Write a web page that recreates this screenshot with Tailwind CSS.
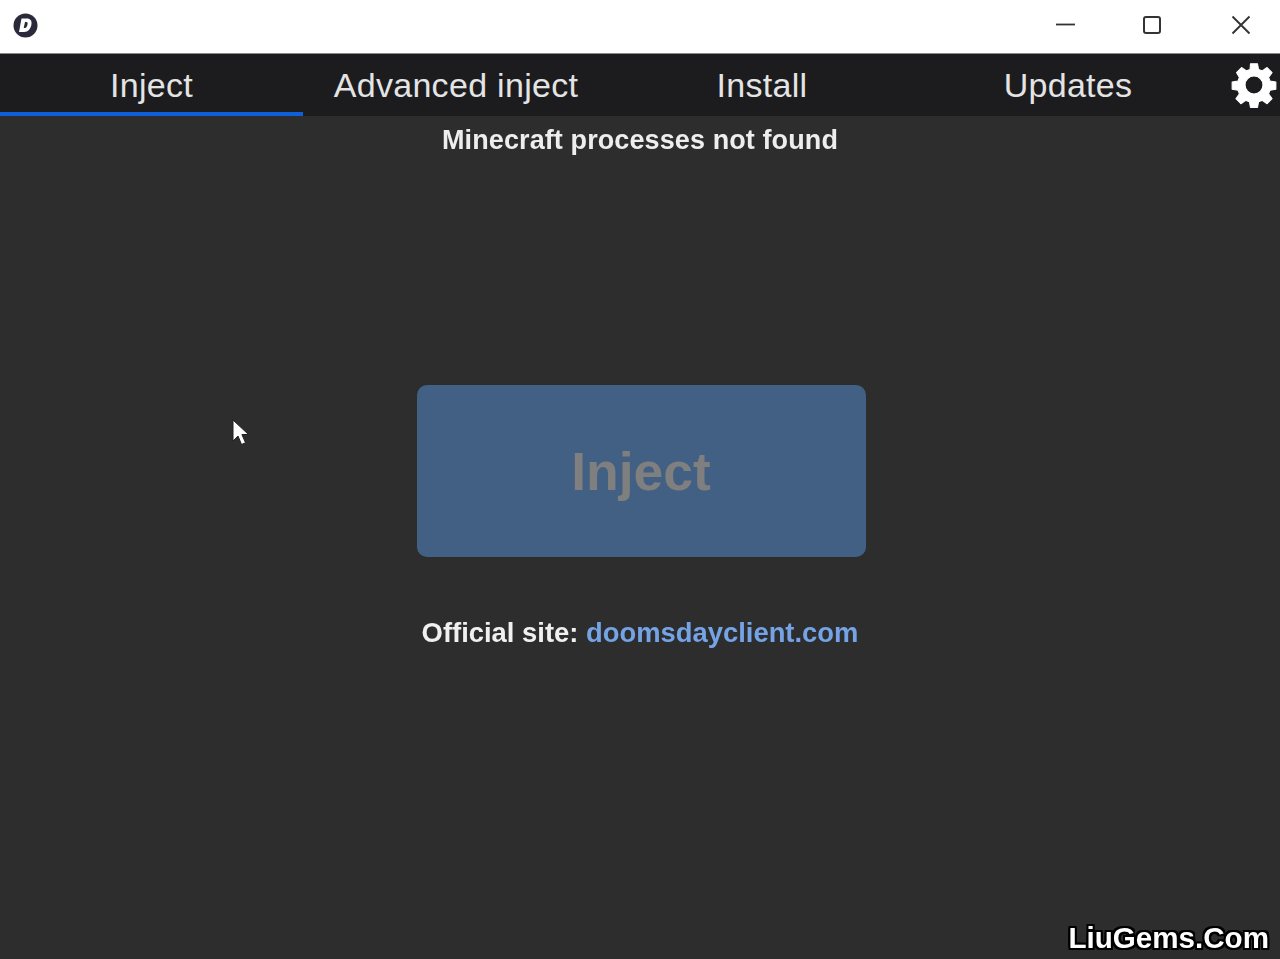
<!DOCTYPE html>
<html lang="en">
<head>
    <meta charset="UTF-8">
    <meta name="viewport" content="width=device-width, initial-scale=1.0">
    <title>Doomsday</title>
    <script src="https://cdn.jsdelivr.net/npm/@tailwindcss/browser@4"></script>
</head>
<body class="relative h-[959px] w-[1280px] overflow-hidden bg-[#2d2d2d] font-['Liberation_Sans',sans-serif] blur-[0.45px]">

    <!-- Title bar -->
    <header class="flex h-[54px] items-center justify-between border-b border-[#8a8a8a] bg-white pb-[3px] pl-[13px] pr-[29px]">
        <svg class="h-[25px] w-[25px]" viewBox="0 0 25 25">
            <circle cx="12.500" cy="12.500" r="12" fill="#2a2a3a"/>
            <path d="M8.500 5.500h5.500c3.300 0 5 2.300 4.500 5.500-.6 4.500-3.300 8-7.500 8H6z" fill="#fff"/>
            <path d="M12 9h1.500c.9 0 1.300.8 1.100 2-.3 2-1.200 4-2.700 4h-1.200z" fill="#2a2a3a"/>
        </svg>
        <div class="flex items-center gap-[67px]">
            <svg class="h-[20px] w-[19px]" viewBox="0 0 19 20"><path d="M0 9.500h19" stroke="#333" stroke-width="1.800"/></svg>
            <svg class="h-[20px] w-[20px]" viewBox="0 0 20 20"><rect x="2" y="2" width="16" height="16" rx="2" fill="none" stroke="#333" stroke-width="2"/></svg>
            <svg class="ml-[2px] h-[20px] w-[20px]" viewBox="0 0 20 20"><path d="M1.500 1.500l17 17M18.500 1.500l-17 17" stroke="#333" stroke-width="1.900"/></svg>
        </div>
    </header>

    <!-- Tabs -->
    <nav class="flex h-[62px] bg-[#1c1c1e] text-[34px] tracking-[0.3px] text-[#e4e4e4]">
        <div class="flex w-[303px] items-center justify-center border-b-[4px] border-[#0f5fd8] pt-[4px]">Inject</div>
        <div class="flex w-[306px] items-center justify-center">Advanced inject</div>
        <div class="flex w-[306px] items-center justify-center">Install</div>
        <div class="flex w-[306px] items-center justify-center">Updates</div>
        <div class="flex flex-1 items-center justify-center pl-[7px]">
            <svg class="h-[50px] w-[50px] shrink-0" viewBox="0 0 24 24">
                <path fill="#fff" stroke="#fff" stroke-width="0.500" stroke-linejoin="round" fill-rule="evenodd" d="M10.300 1.800h3.400l.5 2.800c.6.200 1.200.4 1.700.7l2.400-1.700 2.400 2.400-1.700 2.400c.3.500.5 1.100.7 1.700l2.800.5v3.400l-2.800.5c-.2.600-.4 1.200-.7 1.700l1.700 2.400-2.400 2.400-2.400-1.700c-.5.300-1.100.5-1.700.7l-.5 2.800h-3.400l-.5-2.800c-.6-.2-1.200-.4-1.700-.7l-2.400 1.700-2.400-2.400 1.700-2.400c-.3-.5-.5-1.100-.7-1.700l-2.800-.5v-3.400l2.800-.5c.2-.6.400-1.200.7-1.700L3.600 6l2.400-2.400 2.400 1.700c.5-.3 1.100-.5 1.700-.7zM12 7.700a4.300 4.300 0 1 0 0 8.600 4.300 4.300 0 0 0 0-8.600z"/>
            </svg>
        </div>
    </nav>

    <!-- Main panel -->
    <main class="flex flex-col items-center">
        <p class="mt-[9px] text-[27px] leading-[30px] font-bold tracking-[0.1px] text-[#eeeeee]">Minecraft processes not found</p>
        <button class="ml-[2px] mt-[230px] flex h-[172px] w-[449px] items-center justify-center rounded-[10px] bg-[#426083] pt-[2px] text-[53.500px] font-bold text-[#7f7f7f]">Inject</button>
        <p class="mt-[60px] text-[27.400px] leading-[32px] font-bold text-[#f0f0f0]">Official site: <span class="text-[#74a3e6]">doomsdayclient.com</span></p>
    </main>

    <!-- Mouse pointer -->
    <svg class="absolute left-[232px] top-[419px] h-[30px] w-[18px]" viewBox="0 0 18 30">
        <path d="M1 1v21l5-5 3.500 8.500 4-1.800-3.600-8.200h6.600z" fill="#fff" stroke="#222" stroke-width="1"/>
    </svg>

    <!-- Watermark -->
    <div class="absolute right-[11px] bottom-[3px] text-[29.600px] leading-[36px] font-bold text-white [text-shadow:-2px_0_0_#000,2px_0_0_#000,0_-2px_0_#000,0_2px_0_#000,2px_2px_0_#000,-2px_-2px_0_#000,2px_-2px_0_#000,-2px_2px_0_#000]">LiuGems.Com</div>

</body>
</html>
